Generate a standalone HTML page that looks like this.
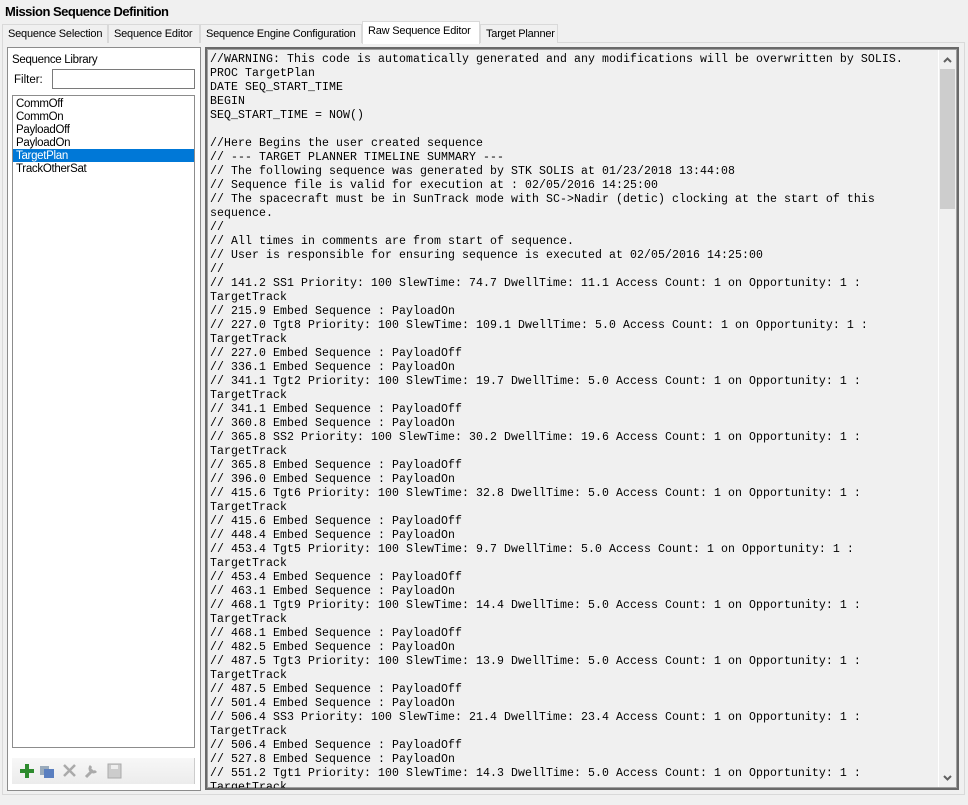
<!DOCTYPE html>
<html><head><style>
*{margin:0;padding:0;box-sizing:border-box}
body{width:968px;height:805px;background:#f0f0f0;font-family:"Liberation Sans",sans-serif;font-size:11px;position:relative;overflow:hidden;color:#000}
.title{position:absolute;left:5px;top:4px;font-weight:bold;font-size:13px;letter-spacing:-0.5px}
.tabs{position:absolute;left:2px;top:24px;height:19px;}
.tab{position:absolute;top:0;height:19px;border:1px solid #d9d9d9;border-bottom:none;background:#f0f0f0;font-size:11px;letter-spacing:-0.2px;padding:3px 0 0 5px;white-space:nowrap;overflow:hidden}
.tab.act{top:-3px;height:23px;background:#fff;border-color:#d9d9d9;padding-top:3px}
.page{position:absolute;left:2px;top:42px;width:963px;height:753px;border:1px solid #d9d9d9;background:#f0f0f0}
.left{position:absolute;left:7px;top:47px;width:194px;height:744px;border:1px solid #8c8c8c;background:#fff}
.list{position:absolute;left:12px;top:95px;width:183px;height:653px;border:1px solid #8c8c8c;background:#fff;padding-top:1px}
.list div{height:13px;line-height:14px;padding-left:3px;font-size:11.5px;letter-spacing:-0.3px}
.list .sel{background:#0078d7;color:#fff}
.filter{position:absolute;left:52px;top:69px;width:143px;height:20px;border:1px solid #7a7a7a;background:#fff}
.tool{position:absolute;left:12px;top:758px;width:183px;height:26px;background:linear-gradient(#f7f7f7,#ececec);border-right:1px solid #ccc}
.ed{position:absolute;left:205px;top:47px;width:754px;height:743px;border:2px solid #696969;background:#f0f0f0;overflow:hidden}
.ed:before{content:"";position:absolute;left:0;top:0;right:0;bottom:0;border:1px solid #a0a0a0}
pre{position:absolute;left:3px;top:4px;font-family:"Liberation Mono",monospace;font-size:11.55px;letter-spacing:0.07px;line-height:14px;color:#000}
.sb{position:absolute;right:2px;top:1px;width:17px;height:737px;background:#f0f0f0;border-left:1px solid #fff}
.thumb{position:absolute;left:1px;top:19px;width:15px;height:140px;background:#cdcdcd}
</style></head><body>
<div class="title">Mission Sequence Definition</div>
<div class="page"></div>
<div class="tabs">
<div class="tab" style="left:0;width:106px">Sequence Selection</div>
<div class="tab" style="left:106px;width:92px">Sequence Editor</div>
<div class="tab" style="left:198px;width:162px">Sequence Engine Configuration</div>
<div class="tab act" style="left:360px;width:118px">Raw Sequence Editor</div>
<div class="tab" style="left:478px;width:78px">Target Planner</div>
</div>
<div class="left"></div>
<div style="position:absolute;left:12px;top:54px;font-size:11.5px;letter-spacing:-0.3px">Sequence Library</div>
<div style="position:absolute;left:14px;top:74px;font-size:11.5px">Filter:</div>
<div class="filter"></div>
<div class="list"><div>CommOff</div><div>CommOn</div><div>PayloadOff</div><div>PayloadOn</div><div class="sel">TargetPlan</div><div>TrackOtherSat</div></div>
<div class="tool">
<svg width="120" height="26" style="position:absolute;left:3px;top:0">
<path d="M5 13h14M12 6v14" stroke="#2e8b2e" stroke-width="4"/>
<rect x="25" y="8" width="9" height="9" fill="#9ab" /><rect x="29" y="11" width="10" height="9" fill="#5a7fc0"/>
<path d="M49 7l11 11M60 7l-11 11" stroke="#aaa" stroke-width="2.5"/>
<path d="M71 19l7-7M76 8a3 3 0 1 0 5 5" stroke="#aaa" stroke-width="3" fill="none"/>
<rect x="93" y="6" width="13" height="14" fill="#ccc" stroke="#aaa"/><rect x="96" y="7" width="7" height="4" fill="#eee"/>
</svg></div>
<div class="ed">
<pre>//WARNING: This code is automatically generated and any modifications will be overwritten by SOLIS.
PROC TargetPlan
DATE SEQ_START_TIME
BEGIN
SEQ_START_TIME = NOW()

//Here Begins the user created sequence
// --- TARGET PLANNER TIMELINE SUMMARY ---
// The following sequence was generated by STK SOLIS at 01/23/2018 13:44:08
// Sequence file is valid for execution at : 02/05/2016 14:25:00
// The spacecraft must be in SunTrack mode with SC-&gt;Nadir (detic) clocking at the start of this
sequence.
//
// All times in comments are from start of sequence.
// User is responsible for ensuring sequence is executed at 02/05/2016 14:25:00
//
// 141.2 SS1 Priority: 100 SlewTime: 74.7 DwellTime: 11.1 Access Count: 1 on Opportunity: 1 :
TargetTrack
// 215.9 Embed Sequence : PayloadOn
// 227.0 Tgt8 Priority: 100 SlewTime: 109.1 DwellTime: 5.0 Access Count: 1 on Opportunity: 1 :
TargetTrack
// 227.0 Embed Sequence : PayloadOff
// 336.1 Embed Sequence : PayloadOn
// 341.1 Tgt2 Priority: 100 SlewTime: 19.7 DwellTime: 5.0 Access Count: 1 on Opportunity: 1 :
TargetTrack
// 341.1 Embed Sequence : PayloadOff
// 360.8 Embed Sequence : PayloadOn
// 365.8 SS2 Priority: 100 SlewTime: 30.2 DwellTime: 19.6 Access Count: 1 on Opportunity: 1 :
TargetTrack
// 365.8 Embed Sequence : PayloadOff
// 396.0 Embed Sequence : PayloadOn
// 415.6 Tgt6 Priority: 100 SlewTime: 32.8 DwellTime: 5.0 Access Count: 1 on Opportunity: 1 :
TargetTrack
// 415.6 Embed Sequence : PayloadOff
// 448.4 Embed Sequence : PayloadOn
// 453.4 Tgt5 Priority: 100 SlewTime: 9.7 DwellTime: 5.0 Access Count: 1 on Opportunity: 1 :
TargetTrack
// 453.4 Embed Sequence : PayloadOff
// 463.1 Embed Sequence : PayloadOn
// 468.1 Tgt9 Priority: 100 SlewTime: 14.4 DwellTime: 5.0 Access Count: 1 on Opportunity: 1 :
TargetTrack
// 468.1 Embed Sequence : PayloadOff
// 482.5 Embed Sequence : PayloadOn
// 487.5 Tgt3 Priority: 100 SlewTime: 13.9 DwellTime: 5.0 Access Count: 1 on Opportunity: 1 :
TargetTrack
// 487.5 Embed Sequence : PayloadOff
// 501.4 Embed Sequence : PayloadOn
// 506.4 SS3 Priority: 100 SlewTime: 21.4 DwellTime: 23.4 Access Count: 1 on Opportunity: 1 :
TargetTrack
// 506.4 Embed Sequence : PayloadOff
// 527.8 Embed Sequence : PayloadOn
// 551.2 Tgt1 Priority: 100 SlewTime: 14.3 DwellTime: 5.0 Access Count: 1 on Opportunity: 1 :
TargetTrack</pre>
<div class="sb"><svg width="17" height="737" style="position:absolute;left:0;top:0"><path d="M5 12l3.5-3.5L12 12" stroke="#606060" stroke-width="2" fill="none"/><path d="M5 726l3.5 3.5L12 726" stroke="#606060" stroke-width="2" fill="none"/></svg><div class="thumb"></div></div>
</div>
</body></html>
